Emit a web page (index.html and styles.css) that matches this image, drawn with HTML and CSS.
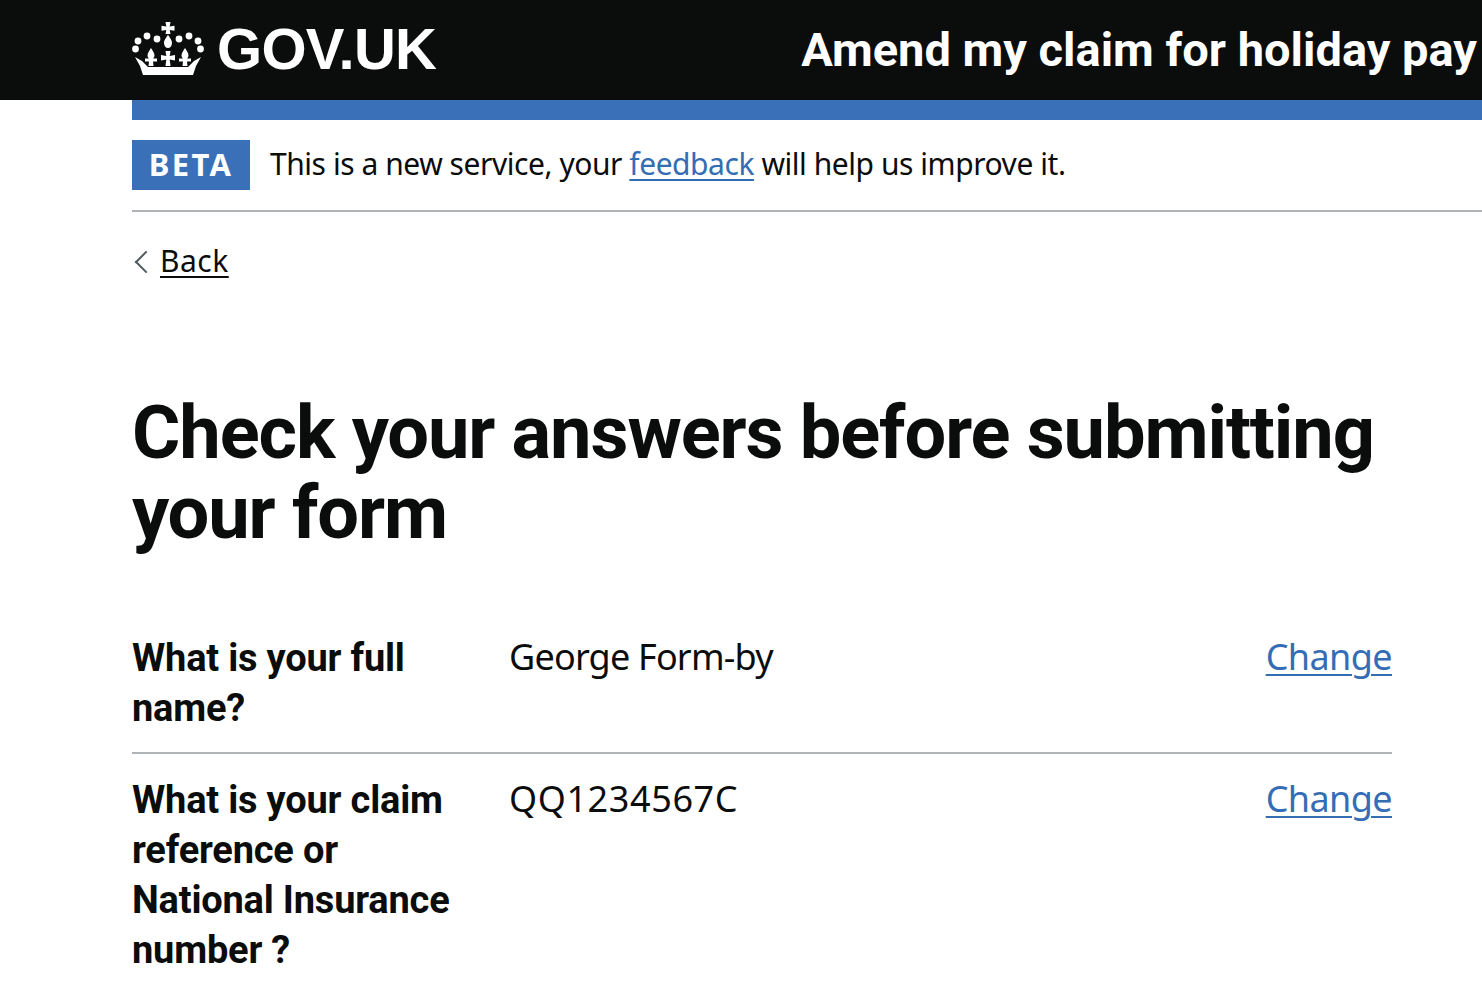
FILE: index.html
```html
<!DOCTYPE html>
<html lang="en">
<head><meta charset="utf-8"><title>Check your answers</title><link rel="stylesheet" href="styles.css"></head>
<body>
<header class="header">
  <div class="logo">
    <svg class="crown" viewBox="4 6 72 53" aria-hidden="true"><g fill="#fff">
      <path d="M37.5 6 H42.5 L41.7 10.5 L46.5 9.7 V14.7 L41.7 13.9 L42.5 18 H37.5 L38.3 13.9 L33.5 14.7 V9.7 L38.3 10.5 Z"/>
      <path d="M40 18.5 C41 21 44 23.5 44 27 C44 30 42 32 40 32 C38 32 36 30 36 27 C36 23.5 39 21 40 18.5Z"/>
      <circle cx="29" cy="23" r="3.4"/><circle cx="51" cy="23" r="3.4"/>
      <circle cx="19" cy="20" r="3.4"/><circle cx="61" cy="20" r="3.4"/>
      <circle cx="10" cy="25" r="3.4"/><circle cx="70" cy="25" r="3.4"/>
      <circle cx="7.5" cy="33" r="3.4"/><circle cx="72.5" cy="33" r="3.4"/>
      <path d="M23 32 C24 34 26.5 36.5 26.5 39.5 C26.5 41 25.5 42 25 42.5 H29 V45.5 H25 L25.5 50 H20.5 L21 45.5 H17 V42.5 H21 C20.5 42 19.5 41 19.5 39.5 C19.5 36.5 22 34 23 32Z"/>
      <path d="M57 32 C58 34 60.5 36.5 60.5 39.5 C60.5 41 59.5 42 59 42.5 H63 V45.5 H59 L59.5 50 H54.5 L55 45.5 H51 V42.5 H55 C54.5 42 53.5 41 53.5 39.5 C53.5 36.5 56 34 57 32Z"/>
      <path d="M37.5 35 H42.5 L41.7 40 L47 39 V44.5 L41.7 43.5 L42.5 50 H37.5 L38.3 43.5 L33 44.5 V39 L38.3 40 Z"/>
      <path d="M15 59 L12 50 L7 41 L14 45 L17 48 L20 51 H60 L63 48 L66 45 L73 41 L68 50 L65 59 Z"/>
    </g></svg>
    <span class="wordmark">GOV.UK</span>
  </div>
  <div class="service">Amend my claim for holiday pay</div>
</header>
<main class="page">
  <div class="rule-blue"></div>
  <div class="beta"><strong class="tag">BETA</strong><span>This is a new service, your <a href="#">feedback</a> will help us improve it.</span></div>
  <a class="back" href="#">Back</a>
  <h1>Check your answers before submitting your form</h1>
  <dl class="summary">
    <div class="row"><dt>What is your full name?</dt><dd>George Form-by</dd><dd class="action"><a href="#">Change</a></dd></div>
    <div class="row"><dt>What is your claim reference or National Insurance number ?</dt><dd class="ref">QQ1234567C</dd><dd class="action"><a href="#">Change</a></dd></div>
  </dl>
</main>
</body>
</html>
```
FILE: styles.css
```css
html, body { margin: 0; padding: 0; background: #fff; }
body { font-family: "Noto Sans", "Liberation Sans", sans-serif; color: #0b0c0c; overflow: hidden; height: 986px; }
a { color: #356db4; text-underline-offset: 4px; text-decoration-thickness: 2px; }
.header { height: 100px; background: #0b0c0c; display: flex; align-items: center; justify-content: space-between; padding: 0 0 3px 132px; box-sizing: border-box; color: #fff; white-space: nowrap; }
.logo { display: flex; align-items: center; gap: 13px; }
.crown { width: 72px; height: 53px; }
.wordmark { font-family: "Liberation Sans", sans-serif; font-weight: 700; font-size: 58px; letter-spacing: -.7px; }
.service { font-family: "Roboto", sans-serif; font-weight: 700; font-size: 47px; padding: 2px 5px 0 0; }
.page { padding-left: 132px; }
.rule-blue { height: 20px; background: #3a70b8; }
.beta { display: flex; align-items: center; gap: 20px; padding: 20px 0; border-bottom: 2px solid #b1b4b6; font-size: 30px; letter-spacing: -.45px; line-height: 50px; }
.beta span { position: relative; top: -1px; }
.tag { background: #3a70b8; color: #fff; width: 118px; height: 50px; display: flex; align-items: center; justify-content: center; box-sizing: border-box; padding-bottom: 2px; font-size: 31px; letter-spacing: 2.3px; }
.back { display: inline-block; margin: 28px 0 0 28px; color: #0b0c0c; font-size: 30px; letter-spacing: .5px; position: relative; text-decoration-color: #0b0c0c; }
.back::before { content: ""; position: absolute; left: -22px; top: 14px; width: 14px; height: 14px; border-left: 2px solid #505a5f; border-bottom: 2px solid #505a5f; transform: rotate(45deg); }
h1 { font-family: "Roboto", sans-serif; margin: 112px 90px 0 0; font-size: 74px; line-height: 80px; letter-spacing: -1.1px; font-weight: 700; }
.summary { margin: 59px 90px 0 0; font-size: 36px; line-height: 50px; }
.row { display: grid; grid-template-columns: 377px 1fr auto; padding: 21px 0 19px; border-bottom: 2px solid #b1b4b6; }
.row:last-child { border-bottom: 0; }
dt { font-family: "Roboto", sans-serif; font-size: 38px; font-weight: 700; letter-spacing: -.2px; padding-right: 40px; }
dd { margin: -1px 0 0; letter-spacing: -.8px; }
.ref { letter-spacing: .6px; }
.action { letter-spacing: -.6px; }
```
